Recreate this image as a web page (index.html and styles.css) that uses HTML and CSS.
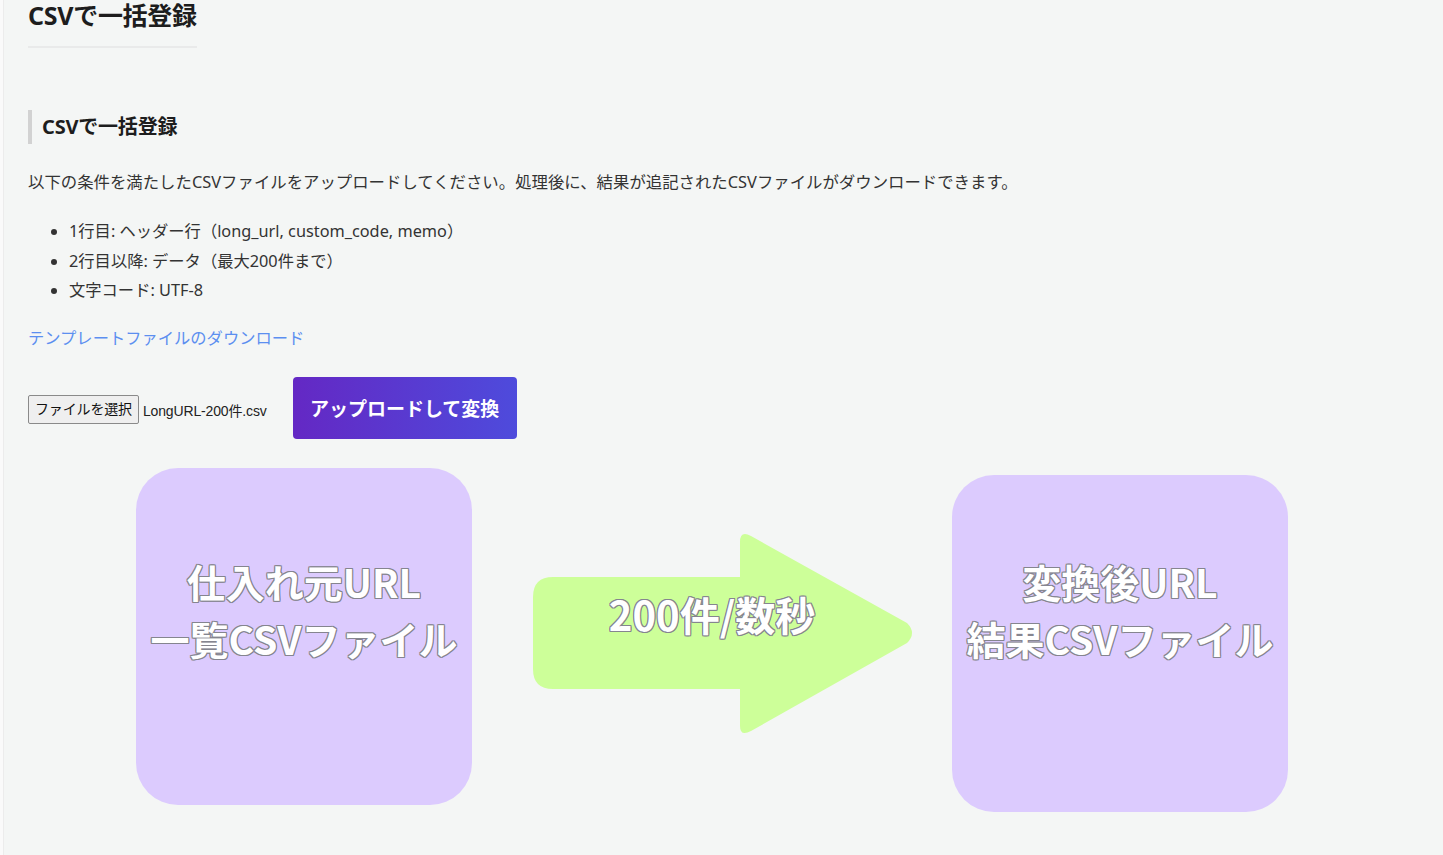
FILE: index.html
```html
<!DOCTYPE html>
<html lang="ja">
<head>
<meta charset="utf-8">
<title>CSVで一括登録</title>
<link rel="stylesheet" href="styles.css">
</head>
<body>
<div class="page">
  <h1 class="title">CSVで一括登録</h1>
  <section class="section">
    <h2 class="section-title">CSVで一括登録</h2>
    <p class="desc">以下の条件を満たしたCSVファイルをアップロードしてください。処理後に、結果が追記されたCSVファイルがダウンロードできます。</p>
    <ul class="rules">
      <li>1行目: ヘッダー行（long_url, custom_code, memo）</li>
      <li>2行目以降: データ（最大200件まで）</li>
      <li>文字コード: UTF-8</li>
    </ul>
    <a class="template-link" href="#">テンプレートファイルのダウンロード</a>
    <div class="upload-row">
      <div class="file-input">
        <span class="file-btn">ファイルを選択</span>
        <span class="file-name">LongURL-200件.csv</span>
      </div>
      <button class="submit-btn">アップロードして変換</button>
    </div>
  </section>
  <div class="diagram">
    <div class="box box-left">
      <div class="box-text">仕入れ元URL<br>一覧CSVファイル</div>
    </div>
    <div class="arrow">
      <svg width="384" height="208" viewBox="0 0 384 208">
        <path d="M20,47 H207 V12 Q207,0 218,6 L374,93 Q384,103 374,113 L218,201 Q207,207 207,196 V159 H20 Q0,159 0,139 V67 Q0,47 20,47 Z" fill="#cdff99"/>
      </svg>
      <div class="arrow-text">200件/数秒</div>
    </div>
    <div class="box box-right">
      <div class="box-text">変換後URL<br>結果CSVファイル</div>
    </div>
  </div>
</div>
</body>
</html>
```
FILE: styles.css
```css
html, body {
  margin: 0;
  padding: 0;
}
body {
  background: #fafafa;
  font-family: "Noto Sans", "Noto Sans CJK JP", sans-serif;
  color: #222;
  height: 855px;
  overflow: hidden;
}
.page {
  margin-left: 3px;
  border-left: 1px solid #ececec;
  background: #f4f6f5;
  padding: 0 0 0 24px;
  min-height: 855px;
  box-sizing: border-box;
}
.title {
  display: inline-block;
  margin: 0;
  font-size: 25px;
  line-height: 30px;
  font-weight: 700;
  padding-bottom: 16px;
  border-bottom: 2px solid #e9eaea;
  color: #1d1d1d;
  letter-spacing: -0.3px;
}
.section {
  padding-top: 62px;
}
.section-title {
  margin: 0;
  border-left: 4px solid #d2d2d2;
  padding-left: 10px;
  font-size: 20px;
  line-height: 34px;
  font-weight: 700;
  color: #1d1d1d;
  letter-spacing: -0.2px;
}
.desc {
  margin: 25px 0 0;
  font-size: 16.4px;
  line-height: 26px;
  color: #333;
}
.rules {
  margin: 22px 0 0;
  padding-left: 41px;
  font-size: 16.3px;
  line-height: 29.5px;
  color: #333;
}
.template-link {
  display: block;
  margin-top: 19px;
  font-size: 16.3px;
  line-height: 26px;
  color: #5c8ff0;
  text-decoration: none;
}
.upload-row {
  display: flex;
  align-items: center;
  margin-top: 26px;
  gap: 26px;
}
.file-input {
  display: flex;
  align-items: center;
  gap: 4px;
  font-family: "Liberation Sans", "Noto Sans CJK JP", sans-serif;
  font-size: 14px;
  margin-top: 4px;
  letter-spacing: -0.15px;
}
.file-btn {
  display: inline-block;
  border: 1px solid #8a8a8a;
  border-radius: 2px;
  background: #efefef;
  padding: 0 6px;
  height: 27px;
  line-height: 27px;
  color: #111;
}
.file-name {
  color: #222;
}
.submit-btn {
  width: 224px;
  height: 62px;
  border: none;
  border-radius: 4px;
  background: linear-gradient(90deg, #6428c4, #4e4bdc);
  color: #fff;
  font-family: "Noto Sans CJK JP", sans-serif;
  font-size: 19px;
  font-weight: 700;
  cursor: pointer;
}
.diagram {
  display: flex;
  align-items: flex-start;
  margin-top: 29px;
  padding-left: 108px;
}
.box {
  width: 336px;
  height: 337px;
  border-radius: 42px;
  background: #dccbfe;
  display: flex;
  justify-content: center;
  padding-top: 85px;
  box-sizing: border-box;
}
.box-right {
  margin-top: 7px;
  padding-top: 78px;
}
.box-text, .arrow-text {
  font-family: "Noto Sans CJK JP", sans-serif;
  font-weight: 700;
  color: #fff;
  text-align: center;
  text-shadow:
    1px 0 0 #85858f, -1px 0 0 #85858f, 0 1px 0 #85858f, 0 -1px 0 #85858f,
    1px 1px 0 #85858f, -1px -1px 0 #85858f, 1px -1px 0 #85858f, -1px 1px 0 #85858f;
}
.box-text {
  font-size: 39px;
  line-height: 57px;
  white-space: nowrap;
}
.arrow {
  position: relative;
  margin: 62px 35px 0 61px;
  width: 384px;
  height: 208px;
}
.arrow svg {
  display: block;
}
.arrow-text {
  position: absolute;
  left: 0;
  width: 358px;
  top: 57px;
  font-size: 40px;
  line-height: 54px;
  white-space: nowrap;
}
```
